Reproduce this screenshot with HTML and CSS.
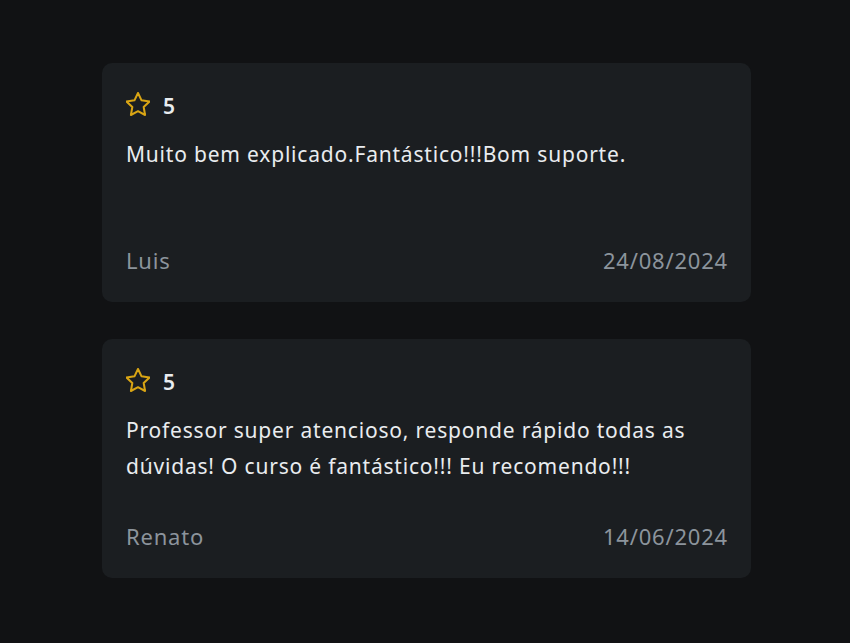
FILE: index.html
```html
<!DOCTYPE html>
<html lang="pt-BR">
<head>
    <meta charset="UTF-8">
    <meta name="viewport" content="width=device-width, initial-scale=1.0">
    <title>Avaliações</title>
    <link rel="stylesheet" href="styles.css">
</head>
<body>
    <div class="reviews">
        <div class="review-card">
            <div class="review-rating">
                <svg class="star" viewBox="2.5 2 19 19" width="24" height="24">
                    <path d="M12 2.8l2.8 5.8 6.3.9-4.6 4.4 1.1 6.3L12 17.2l-5.6 3 1.1-6.3L2.9 9.5l6.3-.9z"/>
                </svg>
                <span>5</span>
            </div>
            <p class="review-text">Muito bem explicado.Fantástico!!!Bom suporte.</p>
            <div class="review-footer">
                <span>Luis</span>
                <span>24/08/2024</span>
            </div>
        </div>

        <div class="review-card">
            <div class="review-rating">
                <svg class="star" viewBox="2.5 2 19 19" width="24" height="24">
                    <path d="M12 2.8l2.8 5.8 6.3.9-4.6 4.4 1.1 6.3L12 17.2l-5.6 3 1.1-6.3L2.9 9.5l6.3-.9z"/>
                </svg>
                <span>5</span>
            </div>
            <p class="review-text">Professor super atencioso, responde rápido todas as dúvidas! O curso é fantástico!!! Eu recomendo!!!</p>
            <div class="review-footer">
                <span>Renato</span>
                <span>14/06/2024</span>
            </div>
        </div>
    </div>
</body>
</html>
```

FILE: styles.css
```css
/* General */
body {
    margin: 0;
    background: #111214;
    color: #e9ecef;
    font-family: 'Noto Sans', 'Open Sans', sans-serif;
}

/* Reviews list */
.reviews {
    width: 649px;
    margin: 63px 0 0 102px;
    display: flex;
    flex-direction: column;
    gap: 37px;
}

/* Card */
.review-card {
    height: 239px;
    box-sizing: border-box;
    padding: 24px 23px 30px 24px;
    background: #1b1e21;
    border-radius: 10px;
    display: flex;
    flex-direction: column;
}

.review-rating {
    height: 34px;
    display: flex;
    align-items: center;
    gap: 13px;
    font-size: 21px;
    font-weight: 600;
}

.review-rating span {
    margin-top: 3px;
}

.star {
    fill: none;
    stroke: #d9a514;
    stroke-width: 1.6;
    stroke-linejoin: round;
}

.review-text {
    margin: 15px 0 0;
    font-size: 21px;
    line-height: 36px;
    letter-spacing: 0.8px;
}

.review-footer {
    margin-top: auto;
    display: flex;
    justify-content: space-between;
    line-height: 24px;
    font-size: 22px;
    letter-spacing: 0.8px;
    color: #8c949c;
}
```
